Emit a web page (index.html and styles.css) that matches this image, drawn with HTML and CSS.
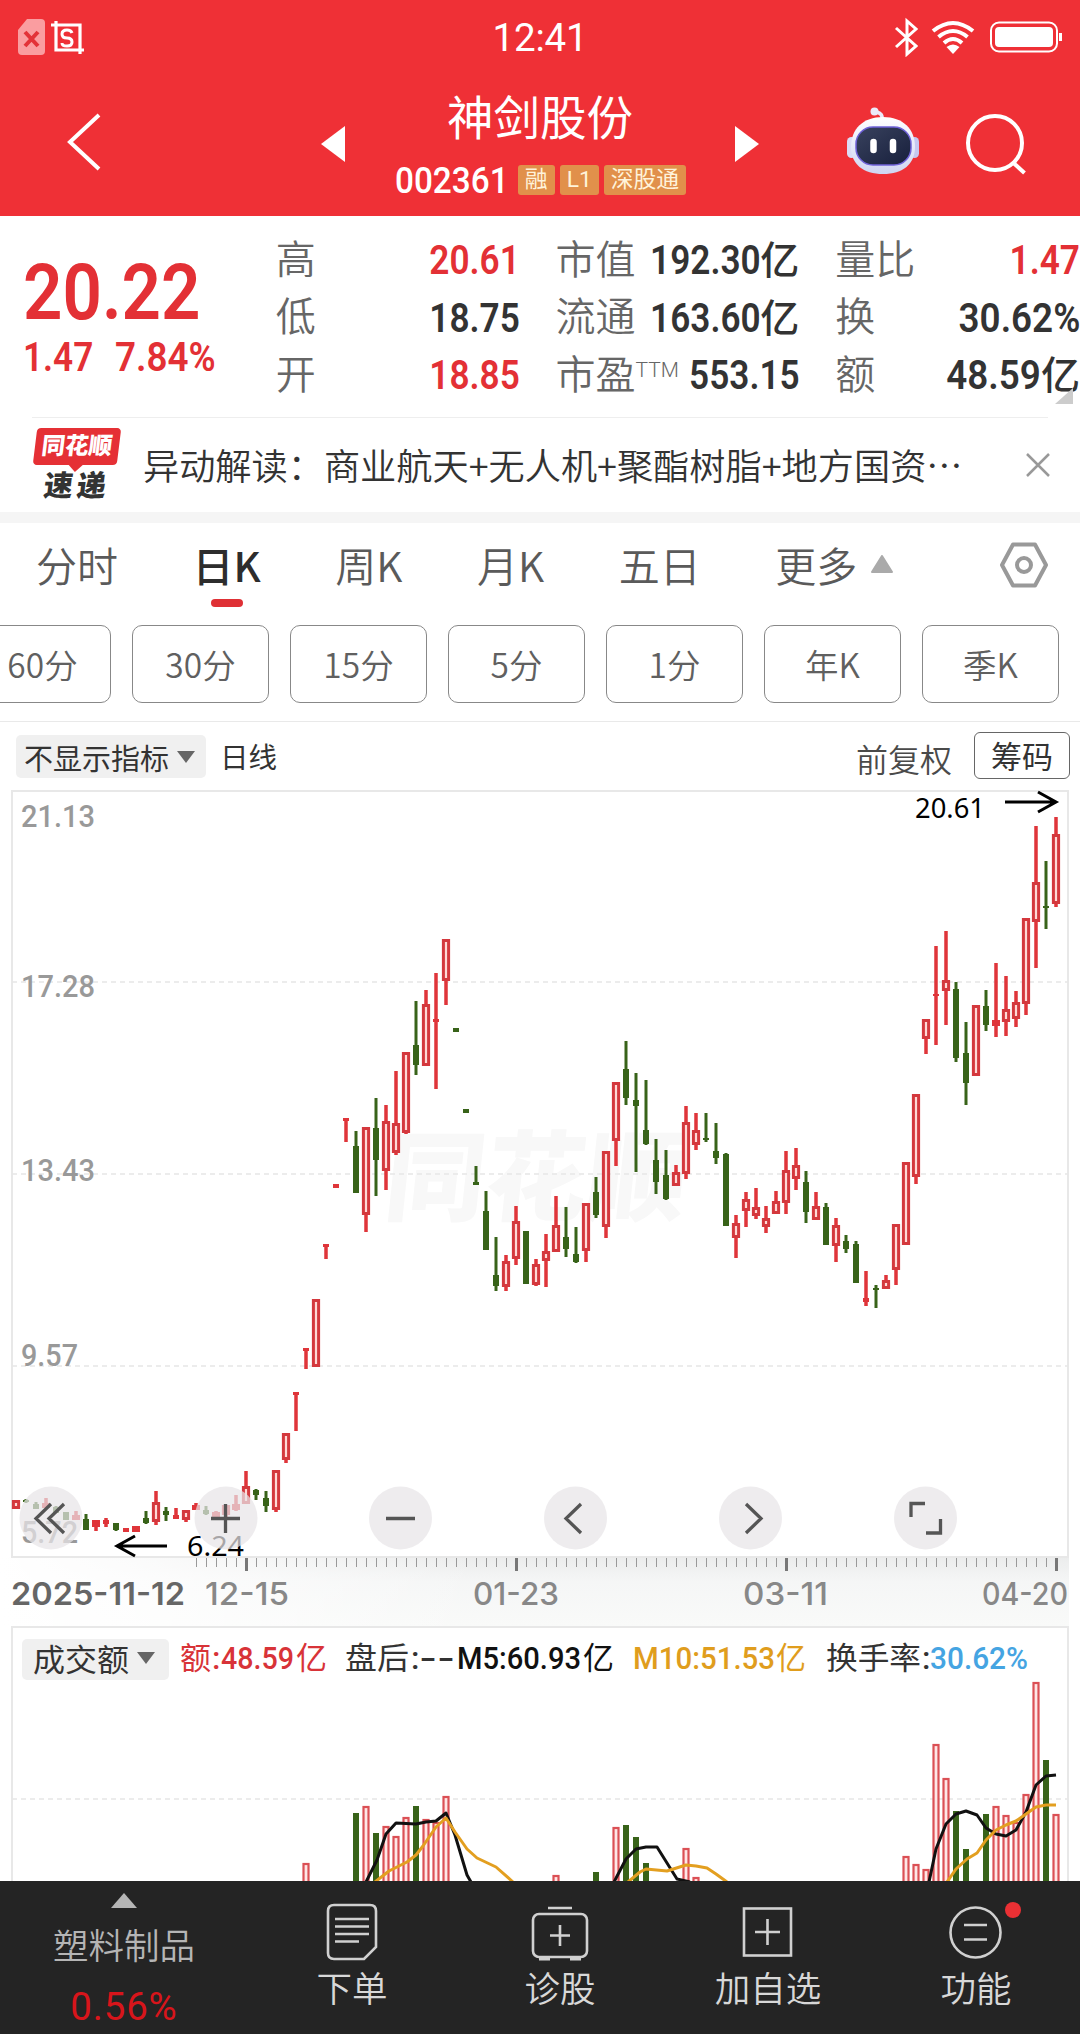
FILE: index.html
```html
<!DOCTYPE html>
<html lang="zh-CN">
<head>
<meta charset="utf-8">
<title>神剑股份 002361</title>
<link rel="stylesheet" href="styles.css">
</head>
<body>
<header class="header">
  <div class="status">
    <svg class="status-left" width="70" height="40" viewBox="16 16 70 40">
      <path d="M27 18h14q4 0 4 4v28q0 4-4 4H22q-4 0-4-4V29z" fill="#fa9da0"/>
      <path d="M25 31l13 14M38 31L25 45" stroke="#e33238" stroke-width="4"/>
      <path d="M51 24h29v29M56 20v29h28" fill="none" stroke="#fff" stroke-width="3.2"/>
      <path d="M72 32q-1-3-5-3-5 0-5 4t5 4q5 0 5 4t-5 4q-5 0-5-3" fill="none" stroke="#fff" stroke-width="3"/>
    </svg>
    <span class="clock">12:41</span>
    <svg class="status-right" width="172" height="40" viewBox="893 16 172 40" fill="none" stroke="#fff">
      <path d="M896 27l20 18-9 8V20l9 8-20 18" stroke-width="3"/>
      <path d="M933 30q20-16 40 0M938.500 36q14.500-12 29 0M944 42q9-8 18 0" stroke-width="4"/>
      <path d="M946.500 46q6.500-5 13 0l-6.500 7z" fill="#fff" stroke="none"/>
      <rect x="991" y="21.500" width="66" height="29" rx="8" stroke-width="2"/>
      <rect x="995" y="26" width="58" height="20" rx="4" fill="#fff" stroke="none"/>
      <path d="M1060.500 32v8" stroke-width="3"/>
    </svg>
  </div>
  <div class="titlebar">
    <svg class="back" width="36" height="62" viewBox="0 0 36 62"><path d="M33 4L4 31l29 27" fill="none" stroke="#fff" stroke-width="4"/></svg>
    <svg class="prev" width="24" height="36" viewBox="0 0 24 36"><path d="M24 0v36L0 18z" fill="#fff"/></svg>
    <div class="stock">
      <h1 class="name">神剑股份</h1>
      <div class="code-row">
        <span class="code">002361</span>
        <span class="tag">融</span><span class="tag">L1</span><span class="tag">深股通</span>
      </div>
    </div>
    <svg class="next" width="24" height="36" viewBox="0 0 24 36"><path d="M0 0v36l24-18z" fill="#fff"/></svg>
    <svg class="robot" width="74" height="68" viewBox="846 107 74 68">
      <defs>
        <linearGradient id="shell" x1="0" y1="0" x2="0" y2="1"><stop offset="0" stop-color="#fff"/><stop offset="1" stop-color="#cfd5f2"/></linearGradient>
        <linearGradient id="face" x1="0" y1="0" x2="1" y2="1"><stop offset="0" stop-color="#39425e"/><stop offset="1" stop-color="#171f3c"/></linearGradient>
      </defs>
      <path d="M882 119q1-5-5-7" fill="none" stroke="#eceafa" stroke-width="3.500"/>
      <circle cx="874.500" cy="111.500" r="4" fill="#eceafa"/>
      <rect x="847" y="137" width="9" height="21" rx="4.500" fill="#dcdcf6"/>
      <rect x="910" y="137" width="9" height="21" rx="4.500" fill="#c6c7f0"/>
      <path d="M883 117c20 0 32 12 32 30 0 17-12 27-32 27s-32-10-32-27c0-18 12-30 32-30z" fill="url(#shell)"/>
      <rect x="856" y="127" width="55" height="38" rx="17" fill="url(#face)" stroke="#6f62d8" stroke-width="1.500"/>
      <path d="M873.500 142v8M893 142v8" stroke="#fff" stroke-width="6.500" stroke-linecap="round"/>
    </svg>
    <svg class="search" width="62" height="62" viewBox="0 0 62 62" fill="none" stroke="#fff" stroke-width="4"><circle cx="30" cy="30" r="27"/><path d="M48.500 50l11 10"/></svg>
  </div>
</header>

<section class="quote">
  <div class="price">
    <div class="last"><span class="cond left">20.22</span></div>
    <div class="change"><span class="cond left">1.47</span><span class="cond left pct">7.84%</span></div>
  </div>
  <dl class="stats s1">
    <dt>高</dt><dd class="up"><span class="cond">20.61</span></dd>
    <dt>低</dt><dd><span class="cond">18.75</span></dd>
    <dt>开</dt><dd class="up"><span class="cond">18.85</span></dd>
  </dl>
  <dl class="stats s2">
    <dt>市值</dt><dd><span class="cond">192.30</span><i>亿</i></dd>
    <dt>流通</dt><dd><span class="cond">163.60</span><i>亿</i></dd>
    <dt>市盈<sup>TTM</sup></dt><dd><span class="cond">553.15</span></dd>
  </dl>
  <dl class="stats s3">
    <dt>量比</dt><dd class="up"><span class="cond">1.47</span></dd>
    <dt>换</dt><dd><span class="cond pct">30.62%</span></dd>
    <dt>额</dt><dd><span class="cond pct">48.59</span><i>亿</i></dd>
  </dl>
  <span class="corner"></span>
</section>

<section class="news">
  <div class="badge"><span class="badge-top">同花顺</span><span class="badge-bottom">速递</span></div>
  <p class="headline">异动解读：商业航天+无人机+聚酯树脂+地方国资…</p>
  <svg class="close" width="24" height="24" viewBox="0 0 24 24"><path d="M1 1l22 22M23 1L1 23" stroke="#999" stroke-width="2.500"/></svg>
</section>

<nav class="tabs">
  <span>分时</span><span class="active">日K</span><span>周K</span><span>月K</span><span>五日</span>
  <span class="more">更多<svg width="22" height="18" viewBox="0 0 22 18"><path d="M11 1L21 17H1z" fill="#aaa" stroke="#aaa" stroke-linejoin="round" stroke-width="2"/></svg></span>
  <svg class="gear" width="50" height="46" viewBox="0 0 50 46" fill="none" stroke="#999" stroke-width="4"><path d="M14 2.500h22L47 23 36 43.500H14L3 23z" stroke-linejoin="round"/><circle cx="25" cy="23" r="7"/></svg>
</nav>
<div class="chips">
  <span>60分</span><span>30分</span><span>15分</span><span>5分</span><span>1分</span><span>年K</span><span>季K</span>
</div>

<section class="toolbar">
  <span class="picker">不显示指标<svg width="18" height="12" viewBox="0 0 18 12"><path d="M0 0h18L9 12z" fill="#666"/></svg></span>
  <span class="period">日线</span>
  <span class="adjust">前复权</span>
  <span class="chip-btn">筹码</span>
</section>

<main class="chart">
  <svg id="chart" width="1080" height="1098" viewBox="0 783 1080 1098">
    <defs>
      <linearGradient id="axisV" x1="0" y1="0" x2="0" y2="1"><stop offset="0" stop-color="#ebecec"/><stop offset=".35" stop-color="#f5f6f6"/><stop offset="1" stop-color="#f9faf9"/></linearGradient>
      <linearGradient id="axisH"><stop offset="0" stop-color="#fff"/><stop offset=".12" stop-color="#fff" stop-opacity=".8"/><stop offset=".45" stop-color="#fff" stop-opacity="0"/></linearGradient>
    </defs>
    <text class="watermark" transform="translate(382 1213) skewX(-6)" textLength="302" lengthAdjust="spacingAndGlyphs">同花顺</text>
    <rect x="0" y="1557" width="1069" height="70" fill="url(#axisV)"/>
    <rect x="0" y="1557" width="1069" height="70" fill="url(#axisH)"/>
    <g class="frame"><rect x="12" y="791" width="1056" height="766"/><path d="M12 1881V1627H1068V1881"/></g>
    <g class="grid"><path d="M12 982H1068M12 1174H1068M12 1366H1068M12 1799H1068"/></g>
    <g class="axis">
      <text x="21" y="827" textLength="74">21.13</text>
      <text x="21" y="997" textLength="74">17.28</text>
      <text x="21" y="1181" textLength="74">13.43</text>
      <text x="21" y="1366" textLength="57">9.57</text>
      <text x="21" y="1543" textLength="57">5.72</text>
    </g>
    <g id="ticks"></g>
    <g id="candles"></g>
    <g class="mark">
      <text x="915" y="818" textLength="70">20.61</text>
      <text x="187" y="1556" textLength="57">6.24</text>
      <path d="M1005 802H1055M1038 792L1056 802L1038 812M167 1546H119M135 1536L117 1546L135 1556"/>
    </g>
    <g class="dates">
      <text class="first" x="11" y="1605" textLength="174">2025-11-12</text>
      <text x="205" y="1605" textLength="84">12-15</text>
      <text x="473" y="1605" textLength="86">01-23</text>
      <text x="743" y="1605" textLength="85">03-11</text>
      <text x="982" y="1605" textLength="86">04-20</text>
    </g>
    <g class="controls">
      <circle cx="51" cy="1518" r="31.500"/><circle cx="226" cy="1518" r="31.500"/><circle cx="400.500" cy="1518" r="31.500"/><circle cx="575.500" cy="1518" r="31.500"/><circle cx="750.500" cy="1518" r="31.500"/><circle cx="925.500" cy="1518" r="31.500"/>
      <path d="M51 1504L36 1518.500L51 1533M64 1504L49 1518.500L64 1533M211 1518.500H240M225.500 1504V1533M386 1518.500H415M581 1504L566 1518.500L581 1533M746 1504L761 1518.500L746 1533M911 1517V1503.500H925M926 1533H940.500V1519"/>
    </g>
    <g id="volume"></g>
    <g class="average">
      <path class="ma5" d="M366 1882L377 1860L386 1834L396 1823L416 1824L426 1822L436 1821L446 1813L455 1835L467 1875L471 1882M614 1882L626 1859L636 1849L646 1847L657 1847L677 1879L690 1882M929 1882L936 1849L946 1824L956 1814L966 1811L977 1815L986 1828L996 1834L1006 1836L1016 1830L1026 1812L1036 1785L1046 1776L1056 1775"/>
      <path class="ma10" d="M375 1882L389 1871L407 1862L416 1855L423 1846L436 1827L446 1818L455 1832L467 1849L477 1858L496 1867L513 1882M628 1882L640 1872L646 1869L667 1871L686 1865L696 1866L707 1868L716 1874L727 1882M947 1882L956 1869L967 1859L977 1853L986 1840L996 1830L1006 1825L1016 1821L1026 1814L1036 1807L1046 1805L1056 1805"/>
    </g>
    <g class="legend">
      <rect x="22" y="1639" width="147" height="41" rx="5"/>
      <path d="M137 1652h18l-9 12z"/>
      <text class="cjk dark" x="33" y="1671" textLength="96">成交额</text>
      <text class="cjk red" x="180" y="1669" textLength="31">额</text><text class="red" x="212" y="1669">:</text>
      <text class="red" x="221" y="1669" textLength="73">48.59</text><text class="cjk red" x="296" y="1669" textLength="31">亿</text>
      <text class="cjk dark" x="345" y="1669" textLength="64">盘后</text><text class="dark" x="411" y="1669">:</text>
      <text class="dark dash" x="419" y="1669" textLength="36">--</text>
      <text x="457" y="1669" textLength="124">M5:60.93</text><text class="cjk" x="583" y="1669" textLength="31">亿</text>
      <text class="gold" x="633" y="1669" textLength="142">M10:51.53</text><text class="cjk gold" x="776" y="1669" textLength="30">亿</text>
      <text class="cjk dark" x="826" y="1669" textLength="95">换手率</text><text class="dark" x="922" y="1669">:</text>
      <text class="blue" x="930" y="1669" textLength="98">30.62%</text>
    </g>
  </svg>
</main>

<footer class="dock">
  <div class="sector">
    <svg width="26" height="15" viewBox="0 0 26 15"><path d="M13 0l13 15H0z" fill="#b5b5b5"/></svg>
    <span class="sector-name">塑料制品</span>
    <span class="sector-pct">0.56%</span>
  </div>
  <div class="item">
    <svg width="60" height="60" viewBox="0 0 60 60"><path d="M12 3h36q6 0 6 6v36L42 57H12q-6 0-6-6V9q0-6 6-6z"/><path d="M13 17h34M13 24.500h34M13 32h34M13 39.500h24"/></svg>
    <span>下单</span>
  </div>
  <div class="item">
    <svg width="60" height="60" viewBox="0 0 60 60"><rect x="3" y="12" width="54" height="43" rx="6"/><path d="M18 6h24M30 23v21M20 33.500h20"/><path d="M9 56.500h11M40 56.500h11" stroke-width="4"/></svg>
    <span>诊股</span>
  </div>
  <div class="item">
    <svg width="60" height="60" viewBox="0 0 60 60"><rect x="6" y="6.500" width="47" height="47"/><path d="M29.500 17v26M17 30h25"/></svg>
    <span>加自选</span>
  </div>
  <div class="item">
    <svg width="60" height="60" viewBox="0 0 60 60"><circle cx="29.500" cy="30.500" r="25"/><path d="M18 23h23M18 37.500h23"/></svg>
    <span>功能</span>
    <b class="dot"></b>
  </div>
</footer>
<script src="chart.js"></script>
</body>
</html>
```
FILE: chart.js
```js
// Each day: [direction, wick top, body top, body bottom, wick bottom]
const days = [
 "r 1500 1500 1509 1509","g 1499 1500 1502 1503","g 1502 1504 1509 1509","r 1498 1503 1508 1508","g 1506 1507 1513 1513",
 "g 1512 1512 1520 1520","r 1511 1515 1520 1520","g 1514 1519 1530 1530","r 1520 1520 1527 1531","r 1518 1520 1524 1527",
 "g 1523 1523 1530 1531","r 1528 1528 1532 1532","r 1526 1526 1532 1532","g 1511 1518 1523 1524","r 1491 1502 1522 1525",
 "g 1507 1511 1515 1521","r 1508 1515 1519 1519","r 1510 1510 1520 1522","r 1503 1505 1510 1510","g 1506 1510 1514 1515",
 "r 1511 1512 1517 1517","r 1505 1505 1515 1518","r 1495 1504 1510 1511","r 1471 1486 1504 1504","g 1489 1490 1495 1500",
 "g 1491 1498 1506 1512","r 1470 1470 1510 1512","r 1433 1433 1460 1463","r 1392 1392 1395 1431","r 1348 1348 1351 1369",
 "r 1299 1299 1367 1367","r 1244 1244 1247 1259","r 1184 1184 1188 1188","r 1118 1118 1121 1142","g 1131 1146 1193 1193",
 "r 1127 1127 1215 1232","g 1098 1128 1160 1196","r 1105 1121 1171 1190","r 1071 1123 1153 1155","r 1052 1052 1133 1134",
 "g 1001 1045 1065 1075","r 990 1004 1066 1066","r 973 1019 1022 1089","r 939 939 981 1005","g 1028 1028 1032 1032",
 "g 1109 1109 1113 1113","g 1166 1182 1185 1185","g 1191 1211 1250 1250","g 1237 1275 1286 1291","r 1255 1261 1287 1291",
 "r 1206 1221 1259 1265","g 1231 1231 1284 1284","r 1259 1264 1285 1286","r 1234 1251 1261 1287","r 1196 1225 1252 1252",
 "g 1207 1237 1249 1257","g 1227 1254 1262 1263","r 1203 1203 1251 1262","g 1177 1192 1215 1218","r 1151 1151 1227 1238",
 "r 1082 1082 1141 1166","g 1041 1069 1098 1105","g 1073 1100 1106 1172","g 1080 1130 1144 1145","g 1139 1160 1182 1194",
 "g 1150 1175 1199 1200","r 1165 1172 1186 1186","r 1106 1122 1174 1179","r 1113 1130 1145 1150","g 1113 1138 1140 1142",
 "g 1123 1151 1158 1164","g 1153 1154 1226 1226","r 1215 1223 1238 1258","r 1192 1199 1211 1227","r 1188 1207 1216 1219",
 "r 1206 1218 1227 1233","r 1191 1201 1214 1214","r 1151 1170 1203 1214","r 1148 1165 1179 1190","g 1171 1182 1212 1223",
 "r 1192 1206 1220 1220","g 1203 1207 1245 1245","r 1218 1225 1246 1262","g 1235 1241 1249 1253","g 1241 1244 1283 1283",
 "r 1271 1298 1302 1306","g 1285 1288 1290 1308","r 1275 1280 1289 1289","r 1224 1224 1270 1285","r 1162 1162 1245 1245",
 "r 1094 1094 1177 1184","r 1019 1019 1039 1054","r 946 994 996 1045","r 931 980 991 1025","g 982 989 1058 1062",
 "g 1022 1053 1083 1105","r 1005 1005 1076 1076","g 990 1006 1025 1031","r 963 1020 1026 1037","r 976 1009 1022 1036",
 "r 991 1002 1019 1027","r 918 918 1004 1015","r 826 882 922 968","g 861 906 908 929","r 817 834 904 907"
];
// Turnover bars: [x, direction, top]
const bars = [
 [306,"r",1863],[356,"g",1813],[366,"r",1806],[376,"g",1833],[386,"r",1826],[396,"r",1836],[406,"r",1817],[416,"g",1806],
 [426,"r",1819],[436,"r",1822],[446,"r",1796],[556,"r",1875],[596,"g",1872],[616,"r",1827],[626,"g",1825],[636,"g",1837],
 [646,"g",1863],[686,"r",1848],[696,"r",1877],[906,"r",1856],[916,"r",1864],[926,"r",1869],[936,"r",1744],[946,"r",1778],
 [956,"g",1811],[966,"g",1849],[986,"g",1814],[996,"r",1806],[1006,"r",1815],[1016,"r",1822],[1026,"r",1794],[1036,"r",1682],
 [1046,"g",1760],[1056,"r",1814]
];
const rect = (cls, x, y, w, h) => `<rect class="${cls}" x="${x}" y="${y}" width="${w}" height="${h}"/>`;

document.getElementById("candles").innerHTML = days.map((d, i) => {
  const [dir, hi, top, bottom, lo] = d.split(" ").map((v, n) => n ? Number(v) : v);
  const x = 16 + i * 10, h = bottom - top;
  if (dir === "g") return rect("down", x - 1.5, hi, 3, lo - hi) + rect("down", x - 3, top, 6, h);
  if (h > 7) {
    return rect("wick", x - 1.75, hi, 3.5, top - hi) + rect("wick", x - 1.75, bottom, 3.5, lo - bottom)
      + rect("hollow", x - 2.6, top + 1.5, 5.2, h - 3);
  }
  const w = h > 4 ? 8 : 6;
  return rect("wick", x - 1.75, hi, 3.5, lo - hi) + rect("wick", x - w / 2, top, w, h);
}).join("");

document.getElementById("volume").innerHTML = bars.map(([x, dir, top]) =>
  dir === "g" ? rect("down", x - 3, top, 6, 1881 - top) : rect("vol", x - 2.5, top + 1, 5, 1890 - top)
).join("");

let ticks = "";
for (let x = 196; x <= 1056; x += 10) {
  const major = (x - 246) % 270 === 0;
  ticks += major ? rect("major", x - 1, 1558, 3, 13) : rect("minor", x, 1558, 1, 9);
}
document.getElementById("ticks").innerHTML = ticks;
for (const t of document.querySelectorAll("#chart text[textLength]")) t.setAttribute("lengthAdjust", "spacingAndGlyphs");
```
FILE: styles.css
```css
* { box-sizing: border-box; margin: 0; padding: 0; }
body { width: 1080px; height: 2034px; overflow: hidden; background: #fff; color: #333; font-family: Roboto, "Noto Sans CJK SC", sans-serif; display: flex; flex-direction: column; }
svg { display: block; flex: none; }
.cond { display: inline-block; font-weight: 600; transform: scaleX(.88); transform-origin: right center; }
.cond.left { transform-origin: left center; }
.cond.pct { transform: scaleX(.92); }

.header { height: 216px; background: #ef3036; color: #fff; flex: none; }
.status { height: 72px; padding: 2px 15px 0 16px; display: grid; grid-template-columns: 1fr auto 1fr; align-items: center; }
.status-right { justify-self: end; }
.clock { font-size: 38.500px; line-height: 40px; margin: 2px 1px 0 0; font-weight: 400; letter-spacing: -.2px; }
.titlebar { height: 144px; display: flex; align-items: flex-start; }
.back { margin: 39px 0 0 66px; }
.prev { margin: 54px 0 0 219px; }
.stock { width: 390px; height: 144px; display: flex; flex-direction: column; align-items: center; }
.name { margin: 19px 0 0 0; font-size: 46.500px; line-height: 56px; font-weight: 400; }
.code-row { margin: 17px 0 0 1px; display: flex; align-items: center; gap: 5px; height: 32px; }
.code { width: 118px; font-size: 37px; font-weight: 500; transform: scaleX(.9); transform-origin: left center; white-space: nowrap; }
.tag { height: 30px; line-height: 30px; padding: 0 7px; font-size: 22.800px; background: #e1904b; color: #fff3da; border-radius: 3px; }
.next { margin-top: 54px; }
.robot { margin: 35px 0 0 87px; }
.search { margin: 41px 0 0 45px; }

.quote { position: relative; height: 201px; display: flex; flex: none; padding-top: 16px; }
.price { width: 276px; padding-left: 23px; color: #e33035; }
.last { font-size: 78.500px; line-height: 80px; margin-top: 20px; height: 79px; }
.change { font-size: 40px; line-height: 48px; margin-top: 3px; display: flex; gap: 12px; }
.stats { display: grid; grid-template-columns: auto 1fr; grid-auto-rows: 57.500px; align-items: center; font-size: 40px; line-height: 56px; }
.stats dt { color: #666; font-weight: 350; white-space: nowrap; }
.stats dd { display: flex; justify-content: flex-end; min-width: 0; white-space: nowrap; padding-top: 1px; }
.stats dd i { font-style: normal; font-size: 39px; font-weight: 500; }
.stats .up { color: #e33035; }
.stats sup { font-size: 21px; line-height: 20px; vertical-align: 12px; }
.s1 { width: 244px; }
.s2 { width: 244px; margin-left: 36px; }
.s3 { width: 245px; margin-left: 36px; }
.corner { position: absolute; left: 1055px; top: 172px; border-left: 18px solid transparent; border-bottom: 16px solid #ccc; }

.news { flex: none; height: 106px; border-bottom: 11px solid #f5f5f5; display: flex; align-items: center; padding-left: 33px; background: linear-gradient(#eee, #eee) 32px 0 / 1016px 1px no-repeat; }
.badge { width: 88px; height: 74px; display: flex; flex-direction: column; align-items: center; font-weight: 900; }
.badge-top { position: relative; width: 84px; height: 38px; line-height: 37px; font-size: 23.500px; text-align: center; color: #fff; background: #e53035; border-radius: 4px; transform: skewX(-7deg); }
.badge-top::after { content: ""; position: absolute; left: 36px; top: 37px; border: 7px solid transparent; border-top-color: #e53035; border-bottom: 0; }
.badge-bottom { font-size: 29px; line-height: 34px; margin-top: 4px; letter-spacing: 4px; transform: skewX(-7deg); }
.headline { margin-left: 22px; width: 860px; font-size: 36.200px; white-space: nowrap; font-family: "Noto Sans CJK SC", sans-serif; line-height: 48px; padding-bottom: 2px; font-weight: 350; }
.close { margin-left: 23px; }

.tabs { flex: none; position: relative; height: 90px; padding-left: 36px; display: flex; gap: 74.500px; font: 350 41px/83px "Noto Sans CJK SC", sans-serif; color: #5a5a5a; white-space: nowrap; }
.tabs .active { position: relative; color: #2d2d2d; font-weight: 500; }
.tabs .active::after { content: ""; position: absolute; left: 18px; top: 76px; width: 32px; height: 8px; border-radius: 4px; background: #df3035; }
.more { display: flex; align-items: center; height: 82px; gap: 14px; }
.gear { position: absolute; left: 999px; top: 19px; }

.chips { flex: none; height: 109px; padding-top: 12px; margin-left: -26px; width: 1106px; display: flex; gap: 21px; border-bottom: 1px solid #e9e9e9; }
.chips span { width: 137px; flex: none; height: 78px; border: 1px solid #888; border-radius: 10px; font: 350 33.500px/76px "Noto Sans CJK SC", sans-serif; color: #606060; text-align: center; }

.toolbar { flex: none; height: 61px; padding: 10px 10px 0 16px; display: flex; align-items: flex-start; font-family: "Noto Sans CJK SC", sans-serif; white-space: nowrap; }
.picker { margin-top: 3px; width: 190px; height: 43px; border-radius: 5px; background: #f0f0f0; padding-left: 8px; display: flex; align-items: center; gap: 8px; font-size: 29px; line-height: 40px; }
.period { margin: 2px 0 0 14px; font-size: 28.500px; line-height: 44px; }
.adjust { margin-left: auto; font-size: 32px; line-height: 48px; font-weight: 350; color: #4a4a4a; margin-top: 2px; }
.chip-btn { margin-left: 22px; width: 96px; height: 47px; border: 1px solid #666; border-radius: 6px; font-size: 31px; line-height: 44px; text-align: center; }

.chart { height: 1098px; flex: none; }
#chart text { font-family: Roboto, "Noto Sans CJK SC", sans-serif; }
#chart .watermark { font: 900 98px "Noto Sans CJK SC", sans-serif; fill: #f8f8f8; }
.frame { fill: none; stroke: #e8e8e8; stroke-width: 2; }
.grid { stroke: #e6e6e6; stroke-width: 1.500; stroke-dasharray: 5 4; }
.axis text { font-size: 31px; font-weight: 500; fill: #999; }
.mark { fill: none; stroke: #000; stroke-width: 3; }
#chart .mark text { font-family: "Noto Sans", sans-serif; font-size: 26.500px; fill: #000; stroke: none; }
#chart .dates text { font-family: Inter, sans-serif; font-size: 31.500px; font-weight: 500; fill: #888; }
#chart .dates .first { fill: #666; font-weight: 600; }
.wick { fill: #df353a; }
.hollow { fill: #ffd9d6; stroke: #d4383d; stroke-width: 3; }
.down { fill: #386319; }
.vol { fill: #ffe6e6; stroke: #db5055; stroke-width: 2.200; }
.major { fill: #777; }
.minor { fill: #999; }
.controls circle { fill: rgba(232, 229, 231, .72); }
.controls path { fill: none; stroke: #555; stroke-width: 3.300; }
.average path { fill: none; stroke-width: 3; stroke-linejoin: round; }
.average .ma5 { stroke: #111; }
.average .ma10 { stroke: #e39f20; }
.legend rect { fill: #f0f0f0; }
.legend path { fill: #666; }
.legend text { font-size: 32px; font-weight: 500; fill: #111; }
#chart .legend .cjk { font: 400 31px "Noto Sans CJK SC", sans-serif; }
#chart .legend .dash { font-family: Inter, sans-serif; }
.legend .dark { fill: #333; }
.legend .red { fill: #d83338; }
.legend .gold { fill: #e09d1d; }
.legend .blue { fill: #45a4e2; }

.dock { height: 153px; flex: none; background: #242424; color: #d8d8d8; display: grid; grid-template-columns: 248px repeat(4, 208px); font: 350 35.500px/46px "Noto Sans CJK SC", sans-serif; }
.sector { display: flex; flex-direction: column; align-items: center; padding-top: 12px; }
.sector-name { color: #b5b5b5; margin-top: 13px; }
.sector-pct { font-family: Roboto, sans-serif; font-size: 38.500px; font-weight: 400; letter-spacing: .8px; color: #d8151b; margin-top: 17px; }
.item { position: relative; display: flex; flex-direction: column; align-items: center; padding-top: 21px; }
.item svg { fill: none; stroke: #d0d0d0; stroke-width: 2.600; }
.item span { margin-top: 2px; }
.dot { position: absolute; left: 133px; top: 21px; width: 16px; height: 16px; border-radius: 50%; background: #ea3034; }
```
